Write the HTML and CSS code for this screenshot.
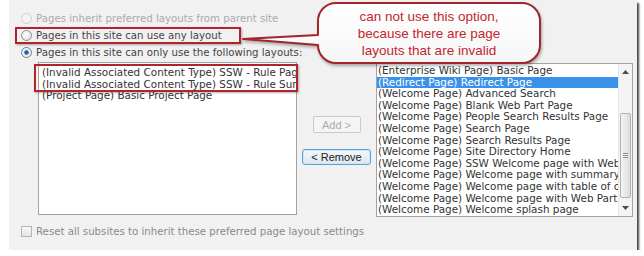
FILE: index.html
```html
<!DOCTYPE html>
<html>
<head>
<meta charset="utf-8">
<link rel="stylesheet" href="styles.css">
</head>
<body>
<div class="panel">
  <div class="opt disabled"><span class="radio r-disabled"></span><span>Pages inherit preferred layouts from parent site</span></div>
  <div class="opt flagged"><span class="radio"></span><span>Pages in this site can use any layout</span></div>
  <div class="opt"><span class="radio checked"></span><span>Pages in this site can only use the following layouts:</span></div>
  <div class="lists">
    <div class="listbox left">
      <div class="item">(Invalid Associated Content Type) SSW - Rule Page</div>
      <div class="item">(Invalid Associated Content Type) SSW - Rule Summary</div>
      <div class="item">(Project Page) Basic Project Page</div>
      <div class="flag-box"></div>
    </div>
    <div class="mid">
      <button class="btn btn-disabled" disabled>Add &gt;</button>
      <button class="btn btn-active">&lt; Remove</button>
    </div>
    <div class="listbox right">
      <div class="items">
        <div class="item">(Enterprise Wiki Page) Basic Page</div>
        <div class="item selected">(Redirect Page) Redirect Page</div>
        <div class="item">(Welcome Page) Advanced Search</div>
        <div class="item">(Welcome Page) Blank Web Part Page</div>
        <div class="item">(Welcome Page) People Search Results Page</div>
        <div class="item">(Welcome Page) Search Page</div>
        <div class="item">(Welcome Page) Search Results Page</div>
        <div class="item">(Welcome Page) Site Directory Home</div>
        <div class="item">(Welcome Page) SSW Welcome page with Web Parts</div>
        <div class="item">(Welcome Page) Welcome page with summary links</div>
        <div class="item">(Welcome Page) Welcome page with table of contents</div>
        <div class="item">(Welcome Page) Welcome page with Web Part zones</div>
        <div class="item">(Welcome Page) Welcome splash page</div>
      </div>
      <div class="scrollbar">
        <div class="sb-btn"><svg width="7" height="4" viewBox="0 0 7 4"><path d="M0 4 L3.5 0 L7 4 Z" fill="#4a4a4a"/></svg></div>
        <div class="sb-track"><div class="sb-thumb"><span class="grip"></span></div></div>
        <div class="sb-btn"><svg width="7" height="4" viewBox="0 0 7 4"><path d="M0 0 L3.5 4 L7 0 Z" fill="#4a4a4a"/></svg></div>
      </div>
    </div>
  </div>
  <div class="reset"><span class="check"></span><span>Reset all subsites to inherit these preferred page layout settings</span></div>

  <svg class="callout-shape" width="310" height="70" viewBox="0 0 310 70">
    <defs>
      <linearGradient id="cfill" x1="0" y1="0" x2="0" y2="1">
        <stop offset="0" stop-color="#ffffff"/>
        <stop offset="1" stop-color="#f6f6f6"/>
      </linearGradient>
    </defs>
    <path d="M97 3 H283 A18 18 0 0 1 301 21 V45 A18 18 0 0 1 283 63 H97 A18 18 0 0 1 79 45 L4 39 L79 35 V21 A18 18 0 0 1 97 3 Z" fill="url(#cfill)" stroke="#a3242a" stroke-width="2" stroke-linejoin="round"/>
  </svg>
  <div class="callout-text">can not use this option,<br>because there are page<br>layouts that are invalid</div>
</div>
</body>
</html>
```
FILE: styles.css
```css
html, body {
  margin: 0;
  padding: 0;
  background: #ffffff;
}

body {
  font-family: "DejaVu Sans", Verdana, sans-serif;
  font-size: 10px;
  color: #3a3a3a;
}

.panel {
  position: relative;
  margin-left: 9px;
  width: 628px;
  height: 250px;
  box-sizing: border-box;
  padding-top: 10px;
  background: #f1f1f1;
  box-shadow: 2px 3px 2px rgba(0, 0, 0, 0.75);
}

.opt {
  display: flex;
  align-items: center;
  gap: 4px;
  height: 17px;
  padding-left: 12px;
  font-size: 10.2px;
  color: #444444;
  white-space: nowrap;
}

.opt.disabled {
  color: #ababab;
}

.opt.flagged {
  width: 226px;
  box-sizing: border-box;
  margin-left: 6px;
  padding-left: 4px;
  border: 2px solid #b0252b;
  box-shadow: 1px 1px 2px rgba(0, 0, 0, 0.3);
}

.radio {
  width: 11px;
  height: 11px;
  box-sizing: border-box;
  border-radius: 50%;
  border: 1px solid #8f8f8f;
  background: radial-gradient(circle at 40% 40%, #ffffff 0%, #e2e2e2 80%);
  flex: none;
}

.radio.r-disabled {
  border-color: #cfcfcf;
  background: #f3f3f3;
}

.radio.checked {
  border-color: #6b7c90;
  background: radial-gradient(circle, #1f5288 0%, #3a74b3 30%, #e8eef5 42%, #ffffff 100%);
}

.lists {
  display: flex;
  align-items: flex-start;
  margin-top: 1px;
  padding-left: 29px;
}

.listbox {
  position: relative;
  box-sizing: border-box;
  background: #ffffff;
  border: 1px solid #a3a3a3;
  color: #333333;
  font-size: 10.4px;
}

.listbox.left {
  width: 259px;
  height: 153px;
  padding: 4px 0 0 3px;
}

.item {
  height: 11.6px;
  line-height: 11.6px;
  white-space: nowrap;
  overflow: hidden;
}

.flag-box {
  position: absolute;
  left: -5px;
  top: 1px;
  width: 264px;
  height: 28px;
  box-sizing: border-box;
  border: 2px solid #b0252b;
  box-shadow: 1px 1px 2px rgba(0, 0, 0, 0.3);
}

.mid {
  width: 79px;
  display: flex;
  flex-direction: column;
  align-items: center;
  gap: 16px;
  padding-top: 54px;
}

.btn {
  font-family: "Liberation Sans", Arial, sans-serif;
  font-size: 11px;
  padding: 0;
  margin: 0;
  box-sizing: border-box;
}

.btn-disabled {
  width: 48px;
  height: 17px;
  border: 1px solid #cacaca;
  border-radius: 2px;
  background: #f5f5f5;
  color: #ababab;
}

.btn-active {
  width: 69px;
  height: 16px;
  border: 1px solid #5e9fd0;
  border-radius: 3px;
  background: linear-gradient(#f3f8fc, #dce7f0);
  color: #222222;
  box-shadow: inset 0 0 0 1px #cfe6f7;
}

.listbox.right {
  width: 257px;
  height: 154px;
  margin-top: 1px;
  display: flex;
}

.items {
  width: 241px;
  padding-left: 1px;
  padding-top: 1px;
  box-sizing: border-box;
}

.item.selected {
  margin-left: -1px;
  padding-left: 1px;
  background: #3a92e8;
  color: #ffffff;
}

.scrollbar {
  width: 14px;
  display: flex;
  flex-direction: column;
  background: #f3f3f3;
  border-left: 1px solid #e6e6e6;
  box-sizing: border-box;
}

.sb-btn {
  height: 16px;
  display: flex;
  align-items: center;
  justify-content: center;
}

.sb-track {
  flex: 1;
  position: relative;
  padding-top: 33px;
}

.sb-thumb {
  margin: 0 1px;
  height: 85px;
  box-sizing: border-box;
  border: 1px solid #b2b2b2;
  border-radius: 2px;
  background: linear-gradient(to right, #f4f4f4, #dcdcdc);
  display: flex;
  align-items: center;
  justify-content: center;
}

.grip {
  width: 5px;
  height: 5px;
  border-top: 1px solid #8a8a8a;
  border-bottom: 1px solid #8a8a8a;
  box-sizing: border-box;
  background: linear-gradient(#f3f3f3 40%, #8a8a8a 40%, #8a8a8a 60%, #f3f3f3 60%);
}

.reset {
  display: flex;
  align-items: center;
  gap: 4px;
  height: 17px;
  margin-top: 6px;
  padding-left: 12px;
  font-size: 10.2px;
  color: #8a8a8a;
  white-space: nowrap;
}

.check {
  width: 11px;
  height: 11px;
  box-sizing: border-box;
  border: 1px solid #b5b5b5;
  background: linear-gradient(#f8f8f8, #e4e4e4);
  flex: none;
}

.callout-shape {
  position: absolute;
  left: 230px;
  top: 0;
  overflow: visible;
  filter: drop-shadow(1px 2px 1.5px rgba(0, 0, 0, 0.3));
}

.callout-text {
  position: absolute;
  left: 309px;
  top: 3px;
  width: 222px;
  padding-top: 5px;
  text-align: center;
  font-family: "Liberation Sans", Arial, sans-serif;
  font-size: 13.5px;
  line-height: 17px;
  color: #c4262e;
}
```
